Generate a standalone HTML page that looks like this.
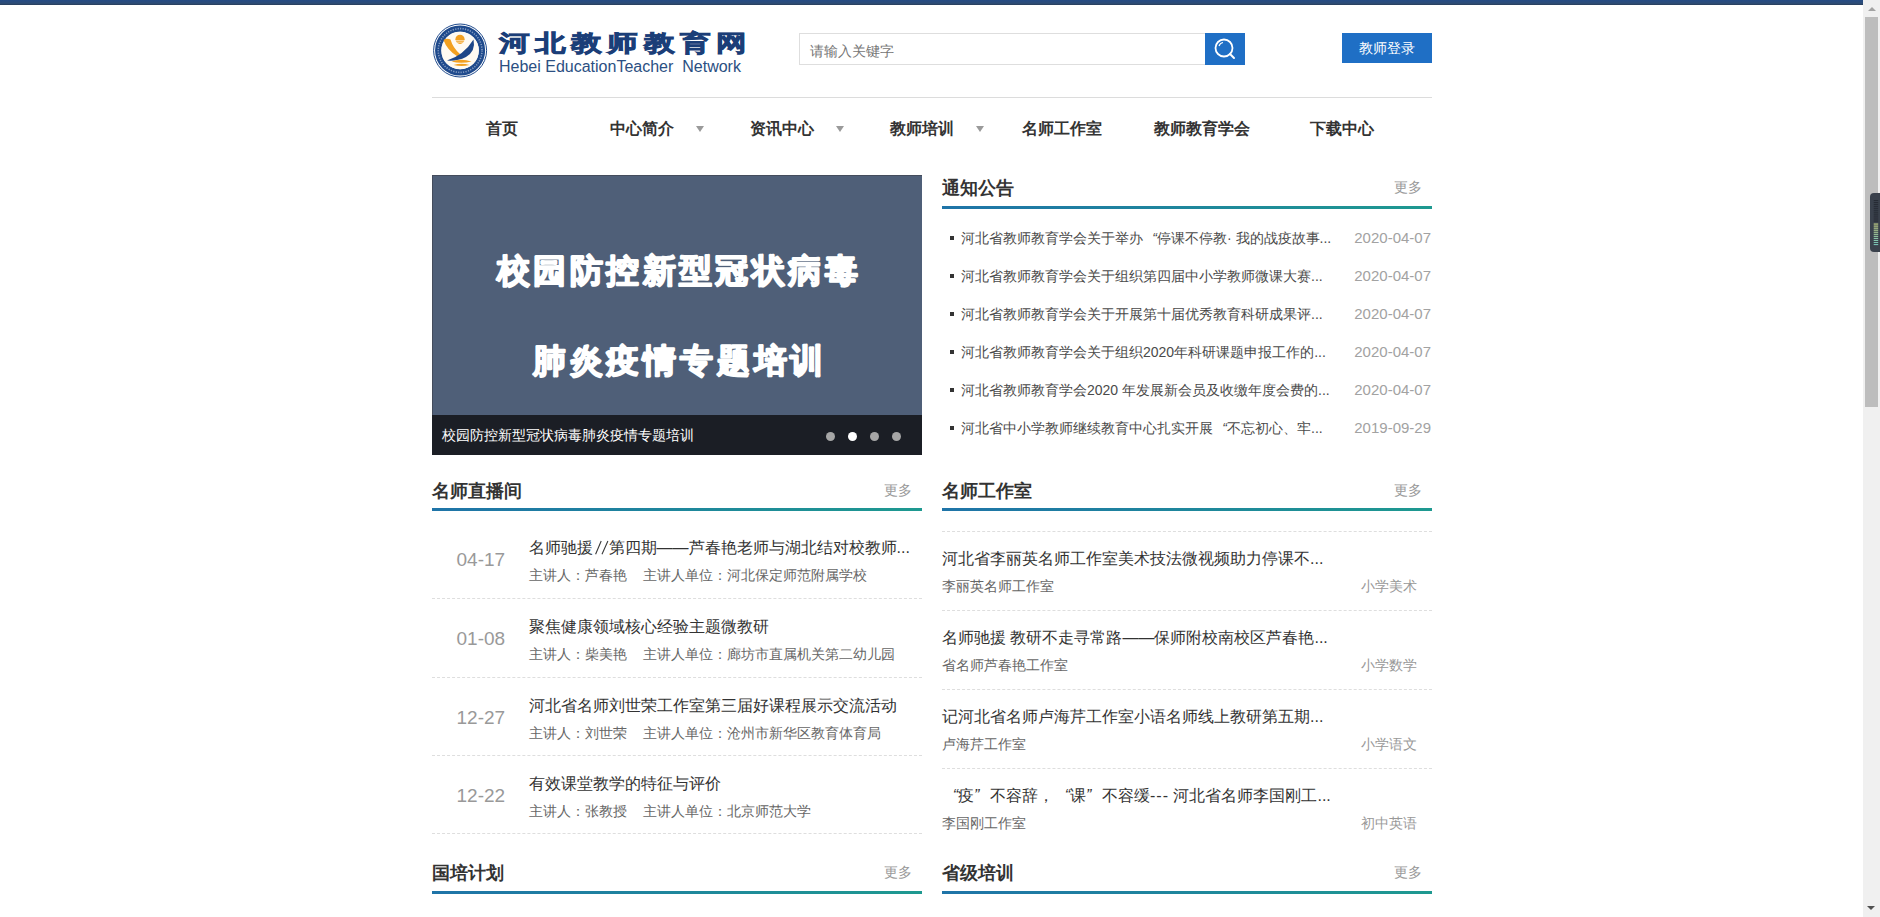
<!DOCTYPE html>
<html><head><meta charset="utf-8">
<style>
*{margin:0;padding:0;box-sizing:border-box}
html,body{width:1880px;height:917px;overflow:hidden;background:#fff;font-family:"Liberation Sans",sans-serif;color:#333}
.topbar{position:absolute;left:0;top:0;width:1863px;height:5px;background:linear-gradient(#254b84,#2b4c7a 50%,#2d4a70 75%,#283c58)}
.abs{position:absolute}
/* scrollbar */
.sb{position:absolute;left:1863px;top:0;width:17px;height:917px;background:#f0f0f0}
.sb .thumb{position:absolute;left:2px;top:17px;width:13px;height:390px;background:#bdbdbd}
.sb .up{position:absolute;left:4.5px;top:7px;width:0;height:0;border-left:4px solid transparent;border-right:4px solid transparent;border-bottom:4px solid #a3a3a3}
.sb .dn{position:absolute;left:4px;top:906px;width:0;height:0;border-left:4px solid transparent;border-right:4px solid transparent;border-top:4px solid #505050}
.grip{position:absolute;left:1870px;top:193px;width:10px;height:59px;background:#3b4350;border-radius:4px 0 0 4px}

.logo-cn{font-size:26px;font-weight:900;color:#1b3e78;letter-spacing:4.9px;line-height:28px;white-space:nowrap;transform-origin:0 0;transform:scale(1.17,0.88);-webkit-text-stroke:0.9px #1b3e78}
.logo-en{font-size:16px;color:#2b4f82;line-height:18px;white-space:nowrap;letter-spacing:0}
.search{border:1px solid #dedede;border-right:none;background:#fff}
.search span{position:absolute;left:10px;top:8px;font-size:14px;color:#757575;line-height:18px}
.sbtn{background:#1f6fc5}
.login{background:#1f6fc5;color:#fff;font-size:14px;text-align:center;line-height:30px}
.nav .ni{position:absolute;top:0;width:140px;height:36px;line-height:36px;text-align:center;font-size:16px;color:#333;font-weight:bold}
.nav .ni i{position:absolute;left:124px;top:15px;width:0;height:0;border-left:4.5px solid transparent;border-right:4.5px solid transparent;border-top:6px solid #9a9a9a}

.banner{background:#4f5f78;overflow:hidden;box-shadow:inset 1px 1px 0 #444c5c}
.banner .bt{position:absolute;left:0;width:490px;text-align:center;font-size:36px;font-weight:900;color:#fff;line-height:40px;letter-spacing:1px}
.banner .cap{position:absolute;left:0;top:240px;width:490px;height:40px;background:#1b1e25}
.banner .cap span{position:absolute;left:10px;top:11px;font-size:14px;color:#fff;line-height:18px}
.banner .cap b{position:absolute;top:17px;width:9px;height:9px;border-radius:50%;background:#a6a6a6}
.sec{height:40px}
.sec .st{position:absolute;left:0;top:4px;font-size:18px;font-weight:bold;color:#333;line-height:24px}
.sec .more{position:absolute;right:10px;top:6px;font-size:14px;color:#999;line-height:18px}
.sec .ln{position:absolute;left:0;top:34px;width:490px;height:3px;background:linear-gradient(90deg,#1f74a8,#1e9990)}
.notice .it{position:relative;height:38px;line-height:38px;font-size:14px}
.notice .it em{position:absolute;left:8px;top:17px;width:4px;height:4px;background:#333}
.notice .it span{position:absolute;left:19px;top:0;color:#4a4a4a}
.notice .it s{position:absolute;right:1px;top:0;text-decoration:none;color:#a2a2a2;font-size:15px}
.live .li{position:relative;height:79px;border-bottom:1px dashed #dedede}
.live .li:nth-child(3),.live .li:nth-child(4){height:78px}
.live .li .d{position:absolute;left:24.5px;top:28px;font-size:19px;color:#999;line-height:24px}
.live .li .t{position:absolute;left:97px;top:18px;font-size:16px;color:#333;line-height:20px;white-space:nowrap}
.live .li .s{position:absolute;left:97px;top:46px;font-size:14px;color:#666;line-height:18px;white-space:nowrap}
.studio{border-top:1px dashed #dedede}
.studio .wi{position:relative;height:79px;border-bottom:1px dashed #dedede}
.studio .wi:last-child{border-bottom:none}
.studio .wi .t{position:absolute;left:0;top:17px;font-size:16px;color:#333;line-height:20px;white-space:nowrap}
.studio .wi .s{position:absolute;left:0;top:45px;font-size:14px;color:#666;line-height:18px}
.studio .wi .g{position:absolute;right:15px;top:45px;font-size:14px;color:#999;line-height:18px}
.ql{display:inline-block;width:1em;text-align:right}.qr{display:inline-block;width:1em;text-align:left}
</style></head>
<body>
<div class="topbar"></div>


<!-- header -->
<svg class="abs" style="left:432px;top:22px" width="57" height="57" viewBox="0 0 57 57">
  <circle cx="28.1" cy="28.5" r="26.5" fill="#fff" stroke="#1f4a8c" stroke-width="1"/>
  <circle cx="28.1" cy="28.5" r="21.9" fill="none" stroke="#1f4a8c" stroke-width="6.3"/>
  <circle cx="28.1" cy="28.5" r="21.9" fill="none" stroke="#c9d3e6" stroke-width="1.6" stroke-dasharray="1.2 1.3" opacity="0.6"/>
  <circle cx="28.1" cy="28.5" r="18.7" fill="#fefaf2"/>
  <circle cx="28" cy="17.3" r="4.6" fill="#f2a020"/>
  <path d="M23 18.6 H33 M23.5 20.2 H32.5" stroke="#fff" stroke-width="0.6"/>
  <path d="M11.5 18 Q15 16 18.5 17.5 Q21 26 28 32 L25.5 34.5 Q15 28 11.5 18 Z" fill="#f2a020"/>
  <path d="M15 38.6 Q32 33 41.5 17.5 Q44 29 34 35 Q25 39.5 15 38.6 Z" fill="#1d4688"/>
  <path d="M19.5 39.5 Q29 36 39.5 39.5 Q29 42 19.5 39.5 Z" fill="#f2a020"/>
  <path d="M21.5 43 Q29.5 40.5 37.5 43 Q29.5 45 21.5 43 Z" fill="#f2a020"/>
</svg>
<div class="abs logo-cn" style="left:499px;top:31px">河北教师教育网</div>
<div class="abs logo-en" style="left:499px;top:58px">Hebei EducationTeacher&nbsp; Network</div>

<div class="abs search" style="left:799px;top:33px;width:407px;height:32px"><span>请输入关键字</span></div>
<div class="abs sbtn" style="left:1205px;top:33px;width:40px;height:32px">
 <svg width="40" height="32" viewBox="0 0 40 32"><circle cx="19" cy="15" r="8.5" fill="none" stroke="#fff" stroke-width="1.8"/><path d="M25 21 L29 25" stroke="#fff" stroke-width="2" stroke-linecap="round"/><path d="M14 13 Q15 10 18 9.5" fill="none" stroke="#fff" stroke-width="1.2"/></svg>
</div>
<div class="abs login" style="left:1342px;top:33px;width:90px;height:30px">教师登录</div>
<div class="abs" style="left:432px;top:97px;width:1000px;height:1px;background:#dcdcdc"></div>

<!-- nav -->
<div class="abs nav" style="left:432px;top:111px;width:1000px;height:36px">
 <div class="ni" style="left:0">首页</div>
 <div class="ni" style="left:140px">中心简介<i></i></div>
 <div class="ni" style="left:280px">资讯中心<i></i></div>
 <div class="ni" style="left:420px">教师培训<i></i></div>
 <div class="ni" style="left:560px">名师工作室</div>
 <div class="ni" style="left:700px">教师教育学会</div>
 <div class="ni" style="left:840px">下载中心</div>
</div>

<!-- banner -->
<div class="abs banner" style="left:432px;top:175px;width:490px;height:280px">
 <svg class="abs" style="left:0;top:0" width="490" height="240" viewBox="0 0 490 240">
  <g font-family="Liberation Sans, sans-serif" font-weight="900" fill="#fff" stroke="#fff" stroke-width="1.8" stroke-linejoin="round" stroke-linecap="round" text-anchor="middle">
   <text x="247" y="107" font-size="33" letter-spacing="3.4">校园防控新型冠状病毒</text>
   <text x="248" y="197" font-size="33" letter-spacing="3.8">肺炎疫情专题培训</text>
  </g>
 </svg>
 <div class="cap"><span>校园防控新型冠状病毒肺炎疫情专题培训</span>
  <b style="left:394px"></b><b style="left:416px;background:#fff"></b><b style="left:438px"></b><b style="left:460px"></b>
 </div>
</div>

<!-- notice -->
<div class="abs sec" style="left:942px;top:172px;width:490px">
 <div class="st">通知公告</div><div class="more">更多</div><div class="ln"></div>
</div>
<div class="abs notice" style="left:942px;top:219px;width:490px">
 <div class="it"><em></em><span>河北省教师教育学会关于举办<i class="ql">“</i>停课不停教· 我的战疫故事...</span><s>2020-04-07</s></div>
 <div class="it"><em></em><span>河北省教师教育学会关于组织第四届中小学教师微课大赛...</span><s>2020-04-07</s></div>
 <div class="it"><em></em><span>河北省教师教育学会关于开展第十届优秀教育科研成果评...</span><s>2020-04-07</s></div>
 <div class="it"><em></em><span>河北省教师教育学会关于组织2020年科研课题申报工作的...</span><s>2020-04-07</s></div>
 <div class="it"><em></em><span>河北省教师教育学会2020 年发展新会员及收缴年度会费的...</span><s>2020-04-07</s></div>
 <div class="it"><em></em><span>河北省中小学教师继续教育中心扎实开展<i class="ql">“</i>不忘初心、牢...</span><s>2019-09-29</s></div>
</div>

<!-- live -->
<div class="abs sec" style="left:432px;top:475px;width:490px">
 <div class="st">名师直播间</div><div class="more">更多</div><div class="ln" style="top:33px"></div>
</div>
<div class="abs live" style="left:432px;top:520px;width:490px">
 <div class="li"><div class="d">04-17</div><div class="t">名师驰援<svg width="15.6" height="15" viewBox="0 0 15.6 15" style="vertical-align:-2px"><path d="M2.6 14.2 L8.2 1 M9 14.2 L14.9 1" stroke="#3a3a3a" stroke-width="1.1"/></svg>第四期——芦春艳老师与湖北结对校教师...</div><div class="s">主讲人：芦春艳<span style="display:inline-block;width:16px"></span>主讲人单位：河北保定师范附属学校</div></div>
 <div class="li"><div class="d">01-08</div><div class="t">聚焦健康领域核心经验主题微教研</div><div class="s">主讲人：柴美艳<span style="display:inline-block;width:16px"></span>主讲人单位：廊坊市直属机关第二幼儿园</div></div>
 <div class="li"><div class="d">12-27</div><div class="t">河北省名师刘世荣工作室第三届好课程展示交流活动</div><div class="s">主讲人：刘世荣<span style="display:inline-block;width:16px"></span>主讲人单位：沧州市新华区教育体育局</div></div>
 <div class="li"><div class="d">12-22</div><div class="t">有效课堂教学的特征与评价</div><div class="s">主讲人：张教授<span style="display:inline-block;width:16px"></span>主讲人单位：北京师范大学</div></div>
</div>

<!-- studio -->
<div class="abs sec" style="left:942px;top:475px;width:490px">
 <div class="st">名师工作室</div><div class="more">更多</div><div class="ln" style="top:33px"></div>
</div>
<div class="abs studio" style="left:942px;top:531px;width:490px">
 <div class="wi"><div class="t">河北省李丽英名师工作室美术技法微视频助力停课不...</div><div class="s">李丽英名师工作室</div><div class="g">小学美术</div></div>
 <div class="wi"><div class="t">名师驰援 教研不走寻常路——保师附校南校区芦春艳...</div><div class="s">省名师芦春艳工作室</div><div class="g">小学数学</div></div>
 <div class="wi"><div class="t">记河北省名师卢海芹工作室小语名师线上教研第五期...</div><div class="s">卢海芹工作室</div><div class="g">小学语文</div></div>
 <div class="wi"><div class="t"><i class="ql">“</i>疫<i class="qr">”</i>不容辞，<i class="ql">“</i>课<i class="qr">”</i>不容缓<span style="letter-spacing:1px">---</span> 河北省名师李国刚工...</div><div class="s">李国刚工作室</div><div class="g">初中英语</div></div>
</div>

<!-- bottom sections -->
<div class="abs sec" style="left:432px;top:857px;width:490px">
 <div class="st">国培计划</div><div class="more">更多</div><div class="ln"></div>
</div>
<div class="abs sec" style="left:942px;top:857px;width:490px">
 <div class="st">省级培训</div><div class="more">更多</div><div class="ln"></div>
</div>

<div class="sb"><div class="up"></div><div class="thumb"></div><div class="dn"></div></div>
<svg class="abs" style="left:1870px;top:193px" width="10" height="59" viewBox="0 0 10 59"><path d="M10 0 H4 Q0 0 0 4 V55 Q0 59 4 59 H10 Z" fill="#3a414c"/><rect x="3.7" y="7.00" width="4.5" height="1.1" fill="#262b34"/><rect x="3.7" y="9.05" width="4.5" height="1.1" fill="#262b34"/><rect x="3.7" y="11.10" width="4.5" height="1.1" fill="#262b34"/><rect x="3.7" y="13.15" width="4.5" height="1.1" fill="#262b34"/><rect x="3.7" y="15.20" width="4.5" height="1.1" fill="#262b34"/><rect x="3.7" y="17.25" width="4.5" height="1.1" fill="#262b34"/><rect x="3.7" y="19.30" width="4.5" height="1.1" fill="#262b34"/><rect x="3.7" y="21.35" width="4.5" height="1.1" fill="#262b34"/><rect x="3.7" y="23.40" width="4.5" height="1.1" fill="#262b34"/><rect x="3.7" y="25.45" width="4.5" height="1.1" fill="#262b34"/><rect x="3.7" y="27.50" width="4.5" height="1.1" fill="#262b34"/><rect x="3.7" y="30.50" width="4.5" height="1.1" fill="#c9d98a"/><rect x="3.7" y="32.55" width="4.5" height="1.1" fill="#c3d78e"/><rect x="3.7" y="34.60" width="4.5" height="1.1" fill="#bcd592"/><rect x="3.7" y="36.65" width="4.5" height="1.1" fill="#b4d396"/><rect x="3.7" y="38.70" width="4.5" height="1.1" fill="#abd19a"/><rect x="3.7" y="40.75" width="4.5" height="1.1" fill="#a1cf9f"/><rect x="3.7" y="42.80" width="4.5" height="1.1" fill="#97cca4"/><rect x="3.7" y="44.85" width="4.5" height="1.1" fill="#8dc9a9"/><rect x="3.7" y="46.90" width="4.5" height="1.1" fill="#84c6ad"/><rect x="3.7" y="48.95" width="4.5" height="1.1" fill="#7cc3b1"/><rect x="3.7" y="51.00" width="4.5" height="1.1" fill="#76c0b4"/></svg>
</body></html>
